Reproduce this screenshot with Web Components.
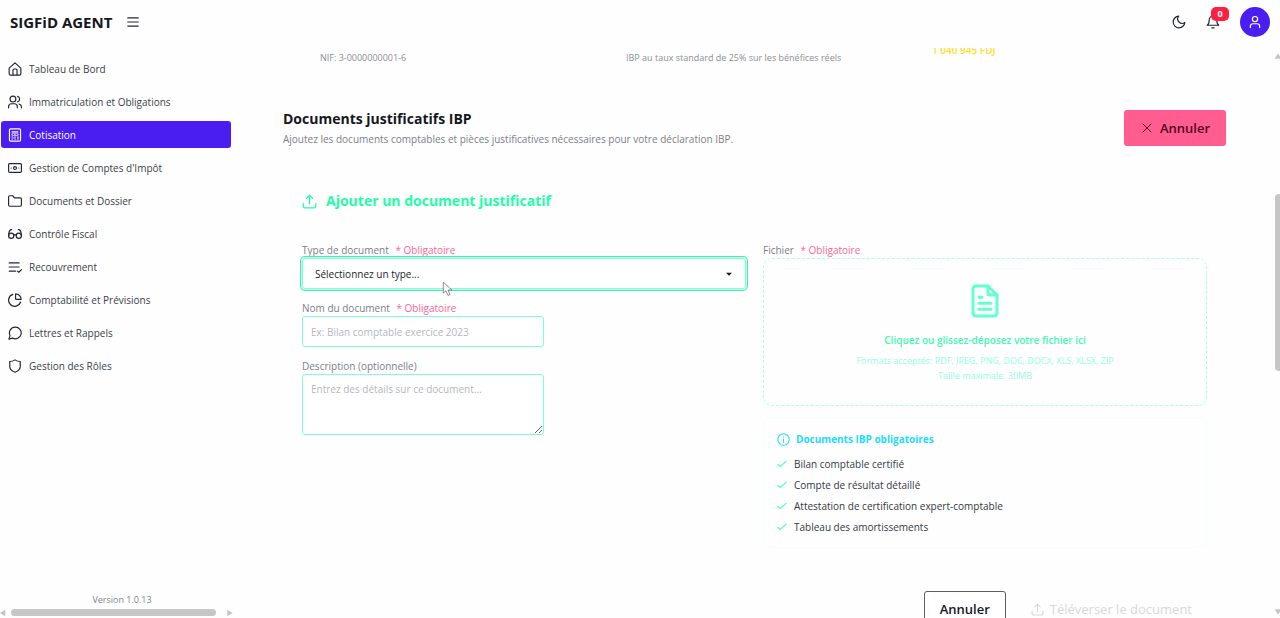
<!DOCTYPE html>
<html lang="fr">
<head>
<meta charset="utf-8">
<meta name="viewport" content="width=device-width, initial-scale=1">
<title>SIGFiD Agent</title>
<style>
  html, body { height: 100%; margin: 0; }
  body { background: #fefefe; color: #1b2028; font: 10px/16px "Open Sans", "Noto Sans", sans-serif; overflow: hidden; }
</style>
</head>
<body>
<sigfid-app></sigfid-app>
<script>
const ICONS = {
  menu: '<path d="M3 5h18M3 12h18M3 19h18"/>',
  home: '<path d="M2 10.500 12 1.500l10 9V20a2.500 2.500 0 0 1-2.500 2.500h-15A2.500 2.500 0 0 1 2 20z"/><path d="M8.500 22v-8a2 2 0 0 1 2-2h3a2 2 0 0 1 2 2v8"/>',
  users: '<path d="M16 22v-2a5 5 0 0 0-5-5H6a5 5 0 0 0-5 5v2"/><circle cx="8.500" cy="7" r="5"/><path d="M23 22v-2a5 5 0 0 0-4-4.600M16.500 2.300a5 5 0 0 1 0 9.500"/>',
  calc: '<rect x="2.500" y="1.500" width="19" height="21" rx="2"/><path d="M7 6.500h10M7 11h.1M12 11h.1M17 11h.1M7 15h.1M12 15h.1M7 19h.1M12 19h.1M17 15v4"/><path d="M7 9h10M7 13h10M7 17h6" stroke-width="1.200"/>',
  money: '<rect x="1" y="4.500" width="22" height="15" rx="2"/><circle cx="12" cy="12" r="2.500"/><path d="M5.500 12h.1M18.500 12h.1"/>',
  folder: '<path d="M23 19a2 2 0 0 1-2 2H3a2 2 0 0 1-2-2V5a2 2 0 0 1 2-2h5l3 3.500h10a2 2 0 0 1 2 2z"/>',
  glasses: '<circle cx="5.500" cy="15" r="4.500"/><circle cx="18.500" cy="15" r="4.500"/><path d="M10 14a2.500 2.500 0 0 1 4 0M1.200 15c0-4 1-9 3.500-10.500h1.500M22.800 15c0-4-1-9-3.500-10.500h-1.500"/>',
  list: '<path d="M2 5h17M2 12h17M2 19h11M16 19l2.500 2 4.500-4.500"/>',
  pie: '<path d="M21.500 15.500A10.500 10.500 0 1 1 8.200 2.300"/><path d="M13 1.500a9.500 9.500 0 0 1 9.500 9.500H14a1 1 0 0 1-1-1z"/>',
  chat: '<path d="M12.500 2a10 10 0 1 1-4.600 18.800L1.500 22.500l2-6A10 10 0 0 1 12.500 2z"/>',
  shield: '<path d="M12 1.500c3 2 6 2.800 9 2.800V13c0 5-4 8-9 9.800C7 21 3 18 3 13V4.300c3 0 6-.8 9-2.800z"/>',
  moon: '<path d="M11.500 2A7.500 7.500 0 0 0 22 12.600 10 10 0 1 1 11.500 2z"/>',
  bell: '<path d="M18.500 8.500a6.500 6.500 0 0 0-13 0c0 7-3.500 9-3.500 9h20s-3.500-2-3.500-9M10 22h4"/>',
  user: '<circle cx="12" cy="7" r="4.500"/><path d="M4 21.500v-2a4.500 4.500 0 0 1 4.500-4.500h7a4.500 4.500 0 0 1 4.500 4.500v2"/>',
  close: '<path d="M4 4l16 16M20 4 4 20"/>',
  upload: '<path d="M2 15v4.500A2.500 2.500 0 0 0 4.500 22h15a2.500 2.500 0 0 0 2.500-2.500V15M12 16V2M7 7l5-5 5 5"/>',
  file: '<path d="M14 2H6a2 2 0 0 0-2 2v16a2 2 0 0 0 2 2h12a2 2 0 0 0 2-2V8z"/><path d="M14 2v5a1 1 0 0 0 1 1h5M8 9.500h2M8 13.500h8M8 17.500h8"/>',
  info: '<circle cx="12" cy="12" r="10.500"/><path d="M12 11v6M12 7.500v.1"/>',
  check: '<path d="M2 13l5.500 5L22 5.500"/>',
  caret: '<path d="M3 8h18l-9 9z" fill="currentColor" stroke="none"/>',
  left: '<path d="M16 2v20L0 12z" fill="currentColor" stroke="none"/>',
  right: '<path d="M4 2v20l16-10z" fill="currentColor" stroke="none"/>',
  up: '<path d="M2 20h20L12 4z" fill="currentColor" stroke="none"/>',
  down: '<path d="M2 4h20L12 20z" fill="currentColor" stroke="none"/>',
  pointer: '<path d="M4 1v18l4.500-4 3.500 8 3.500-1.500-3.500-7.500h6z" fill="#fff"/>'
};

function define(name, build) {
  customElements.define(name, class extends HTMLElement {
    connectedCallback() {
      if (this.shadowRoot) return;
      const template = document.createElement('template');
      template.innerHTML = build(this);
      this.attachShadow({ mode: 'open' }).append(template.content.cloneNode(true));
    }
  });
}

/* A stroked icon: name, size in pixels, stroke weight. */
define('ui-icon', el => {
  const size = el.getAttribute('size') || 14;
  return `
  <style>:host { display: block; flex: none; } svg { display: block; }</style>
  <svg width="${size}" height="${size}" viewBox="0 0 24 24" fill="none" stroke="currentColor" aria-hidden="true"
    stroke-width="${el.getAttribute('weight') || 2}" stroke-linecap="round" stroke-linejoin="round">${ICONS[el.getAttribute('name')]}</svg>`;
});

define('ui-button', el => `
  <style>
    :host { display: block; }
    button { display: flex; align-items: center; gap: 7px; height: 36px; padding: 0 15px 0 16px; box-sizing: border-box;
      font: 600 13px/20px "Open Sans", "Noto Sans", sans-serif; border: 1px solid transparent; border-radius: 3px; background: none; color: #15181e; }
    :host([kind="danger"]) button { background: #ff5c8f; color: #52041f; }
    :host([kind="outline"]) button { border-color: #5c5c60; padding: 0 15px; background: #fff; }
    :host([kind="quiet"]) button { color: #d8d8da; font-weight: 400; padding: 0 14px 0 24px; gap: 6px; }
  </style>
  <button type="button"${el.hasAttribute('disabled') ? ' disabled' : ''}><slot name="icon"></slot><slot></slot></button>`);

define('app-header', () => `
  <style>
    :host { display: flex; align-items: center; justify-content: space-between; height: 44px; padding: 0 10px; flex: none; }
    div { display: flex; align-items: center; }
    .brand { gap: 14px; }
    h1 { margin: 0; font-size: 15px; line-height: 20px; font-weight: 700; color: #14171d; }
    button { border: 0; padding: 0; background: none; color: #22262e; position: relative; }
    .tools { gap: 20px; }
    .badge { position: absolute; left: 5px; top: -8px; width: 18px; height: 14px; border-radius: 5px; background: #ff1f40; color: #fff;
      font: 700 9px/14px "Open Sans", sans-serif; text-align: center; }
    .avatar { display: grid; place-items: center; width: 30px; height: 30px; border-radius: 50%; background: #4a1df0; color: #fff; }
  </style>
  <div class="brand"><h1>SIGFiD AGENT</h1><button type="button" aria-label="Menu"><ui-icon name="menu"></ui-icon></button></div>
  <div class="tools">
    <button type="button" aria-label="Thème"><ui-icon name="moon"></ui-icon></button>
    <button type="button" aria-label="Notifications"><ui-icon name="bell"></ui-icon><span class="badge">0</span></button>
    <button type="button" class="avatar" aria-label="Profil"><ui-icon name="user"></ui-icon></button>
  </div>`);

define('nav-item', el => `
  <style>
    :host { display: block; }
    a { display: flex; align-items: center; gap: 7px; height: 27px; padding: 0 7px; border-radius: 3px; color: #3a3f49; text-decoration: none; white-space: nowrap; }
    ui-icon { color: #22262e; }
    :host([active]) a { background: #4a1df0; color: #fff; }
    :host([active]) ui-icon { color: #fff; }
  </style>
  <a href="#"${el.hasAttribute('active') ? ' aria-current="page"' : ''}><ui-icon name="${el.getAttribute('icon')}"></ui-icon><slot></slot></a>`);

define('scroll-rail', el => {
  const v = el.hasAttribute('vertical');
  return `
  <style>
    :host { display: flex; align-items: center; color: #c4c4c6; overflow: hidden; flex: none; }
    :host([vertical]) { flex-direction: column; width: 6px; align-items: flex-start; padding: 4px 0 2px; }
    .track { flex: 1; display: flex; align-self: stretch; align-items: center; }
    .thumb { background: #c6c6c6; border-radius: 4px; height: 7px; width: 205px; }
    :host([vertical]) .track { display: grid; grid-template-rows: 134fr 176fr 236fr; align-items: stretch; }
    :host([vertical]) .thumb { width: 8px; height: auto; grid-row: 2; margin-left: 1px; }
    :host(:not([vertical])) .track { padding-left: 3px; }
  </style>
  <ui-icon name="${v ? 'up' : 'left'}" size="8"></ui-icon><div class="track"><div class="thumb"></div></div><ui-icon name="${v ? 'down' : 'right'}" size="8"></ui-icon>`;
});

define('app-sidebar', () => `
  <style>
    :host { display: flex; flex-direction: column; width: 236px; flex: none; box-sizing: border-box; }
    nav { display: grid; gap: 6px; padding: 11px 5px 0 1px; }
    .version { margin: auto 0 0; padding-left: 8px; text-align: center; font-size: 9px; line-height: 14px; color: #80848c; }
    scroll-rail { width: 234px; height: 11px; }
  </style>
  <nav aria-label="Navigation principale">
    <nav-item icon="home">Tableau de Bord</nav-item>
    <nav-item icon="users">Immatriculation et Obligations</nav-item>
    <nav-item icon="calc" active>Cotisation</nav-item>
    <nav-item icon="money">Gestion de Comptes d'Impôt</nav-item>
    <nav-item icon="folder">Documents et Dossier</nav-item>
    <nav-item icon="glasses">Contrôle Fiscal</nav-item>
    <nav-item icon="list">Recouvrement</nav-item>
    <nav-item icon="pie">Comptabilité et Prévisions</nav-item>
    <nav-item icon="chat">Lettres et Rappels</nav-item>
    <nav-item icon="shield">Gestion des Rôles</nav-item>
  </nav>
  <p class="version">Version 1.0.13</p>
  <scroll-rail></scroll-rail>`);

define('stat-row', () => `
  <style>
    :host { display: grid; grid-template-columns: 1fr 1fr 1fr; column-gap: 12px; height: 22px; padding-left: 37px; font-size: 9px; line-height: 16px; color: #8a8e95; overflow: hidden; }
    span { align-self: start; margin-top: 2px; }
    .amount { font-size: 10px; line-height: 14px; font-weight: 600; color: #ffe01f; margin-top: -5px; }
  </style>
  <span>NIF: 3-0000000001-6</span><span>IBP au taux standard de 25% sur les bénéfices réels</span><span class="amount">1 040 945 FDJ</span>`);

/* Label and control share one shadow root so that the label's "for" works. */
define('form-field', el => {
  const kind = el.getAttribute('kind');
  const hint = el.getAttribute('placeholder');
  const control = {
    select: `<div class="wrap"><select id="c"><option>${hint}</option></select><ui-icon name="caret" size="8"></ui-icon><ui-icon class="pointer" name="pointer" size="14" weight="1"></ui-icon></div>`,
    text: `<input id="c" type="text" placeholder="${hint}">`,
    area: `<textarea id="c" placeholder="${hint}"></textarea>`
  }[kind];
  return `
  <style>
    :host { display: block; }
    label { display: block; height: 16px; line-height: 16px; color: #7c8087; white-space: nowrap; font-weight: 500; }
    .req { margin-left: 4px; color: #ff6699; }
    select, input, textarea { display: block; box-sizing: border-box; border: 1px solid #7fffd4; border-radius: 3px; background: #fff;
      font: 10px/16px "Open Sans", "Noto Sans", sans-serif; color: #22262e; margin: 0; }
    input, textarea { width: 242px; height: 31px; padding: 0 8px; }
    textarea { height: 61px; padding: 6px 8px; resize: vertical; }
    ::placeholder { color: #b4b7bc; opacity: 1; }
    .wrap { position: relative; }
    select { appearance: none; width: 100%; height: 31px; padding: 0 12px; border-color: #7fffd8; outline: 0;
      box-shadow: 0 0 0 1px #c4ffea, 0 0 0 2px #46ecb2; }
    .wrap ui-icon { position: absolute; right: 13px; top: 12px; color: #15181e; }
    .wrap .pointer { left: 139px; right: auto; top: 24px; color: #444; }
  </style>
  <label for="c">${el.getAttribute('label')}${el.hasAttribute('required') ? ' <span class="req">* Obligatoire</span>' : ''}</label>
  ${control}`;
});

define('drop-zone', () => `
  <style>
    :host { display: block; }
    .label { display: block; height: 16px; line-height: 16px; color: #7c8087; font-weight: 500; }
    .req { margin-left: 4px; color: #ff6699; }
    .zone { display: flex; flex-direction: column; align-items: center; height: 148px; padding-top: 24px; box-sizing: border-box;
      border: 1px dashed #a8fff0; border-radius: 9px; text-align: center; color: #62ffd0; }
    strong { margin: 12px 0 4px; color: #3ffbb4; font-weight: 600; line-height: 18px; }
    small { display: block; font-size: 9px; line-height: 15px; color: #93ffe4; }
    input { position: absolute; width: 1px; height: 1px; opacity: 0; }
  </style>
  <label class="label" for="f">Fichier <span class="req">* Obligatoire</span></label>
  <label class="zone" for="f">
    <ui-icon name="file" size="36"></ui-icon>
    <strong>Cliquez ou glissez-déposez votre fichier ici</strong>
    <small>Formats acceptés: PDF, JPEG, PNG, DOC, DOCX, XLS, XLSX, ZIP</small>
    <small>Taille maximale: 30MB</small>
  </label>
  <input id="f" type="file">`);

define('check-item', () => `
  <style>
    :host { display: flex; align-items: center; gap: 7px; line-height: 16px; color: #343944; }
    ui-icon { color: #5cffc8; }
  </style>
  <ui-icon name="check" size="10" weight="3"></ui-icon><span><slot></slot></span>`);

define('info-panel', () => `
  <style>
    :host { display: block; border: 1px solid #f3fffd; border-radius: 9px; padding: 12px 12px 12px 13px; box-sizing: border-box; }
    h4 { display: flex; align-items: center; gap: 6px; margin: 0 0 8px; font-size: 10px; line-height: 18px; font-weight: 700; color: #22dcff; }
    .list { display: grid; gap: 5px; }
  </style>
  <h4><ui-icon name="info" size="13"></ui-icon><slot name="title"></slot></h4>
  <div class="list"><slot></slot></div>`);

define('documents-page', () => `
  <style>
    :host { display: block; flex: 1; min-width: 0; overflow: hidden; padding: 0 48px 0 47px; margin-top: 4px; }
    header { display: flex; justify-content: space-between; align-items: flex-start; margin-top: 40px; }
    h2 { margin: 0; font-size: 14px; line-height: 18px; font-weight: 700; color: #14171d; }
    header p { margin: 3px 0 0; line-height: 16px; color: #7c8087; }
    section { padding: 44px 19px 0; }
    h3 { display: flex; align-items: center; gap: 9px; margin: 0; font-size: 14px; line-height: 20px; font-weight: 700; color: #1fffa8; }
    .cols { display: grid; grid-template-columns: 1fr 1fr; gap: 17px; margin-top: 31px; }
    .stack { display: grid; gap: 11px; align-content: start; }
    footer { display: flex; justify-content: flex-end; margin-top: 43px; }
  </style>
  <stat-row></stat-row>
  <header>
    <div><h2>Documents justificatifs IBP</h2><p>Ajoutez les documents comptables et pièces justificatives nécessaires pour votre déclaration IBP.</p></div>
    <ui-button kind="danger"><ui-icon slot="icon" name="close" size="12"></ui-icon>Annuler</ui-button>
  </header>
  <section>
    <h3><ui-icon name="upload" size="15"></ui-icon>Ajouter un document justificatif</h3>
    <div class="cols">
      <div class="stack">
        <form-field kind="select" label="Type de document" required placeholder="Sélectionnez un type..."></form-field>
        <form-field kind="text" label="Nom du document" required placeholder="Ex: Bilan comptable exercice 2023"></form-field>
        <form-field kind="area" label="Description (optionnelle)" placeholder="Entrez des détails sur ce document..."></form-field>
      </div>
      <div class="stack">
        <drop-zone></drop-zone>
        <info-panel>
          <span slot="title">Documents IBP obligatoires</span>
          <check-item>Bilan comptable certifié</check-item>
          <check-item>Compte de résultat détaillé</check-item>
          <check-item>Attestation de certification expert-comptable</check-item>
          <check-item>Tableau des amortissements</check-item>
        </info-panel>
      </div>
    </div>
    <footer>
      <ui-button kind="outline">Annuler</ui-button>
      <ui-button kind="quiet" disabled><ui-icon slot="icon" name="upload" size="13"></ui-icon>Téléverser le document</ui-button>
    </footer>
  </section>`);

define('sigfid-app', () => `
  <style>
    :host { display: flex; flex-direction: column; height: 100vh; }
    .body { display: flex; flex: 1; min-height: 0; }
    scroll-rail { margin-top: 4px; }
  </style>
  <app-header></app-header>
  <div class="body"><app-sidebar></app-sidebar><documents-page></documents-page><scroll-rail vertical></scroll-rail></div>`);
</script>
</body>
</html>
